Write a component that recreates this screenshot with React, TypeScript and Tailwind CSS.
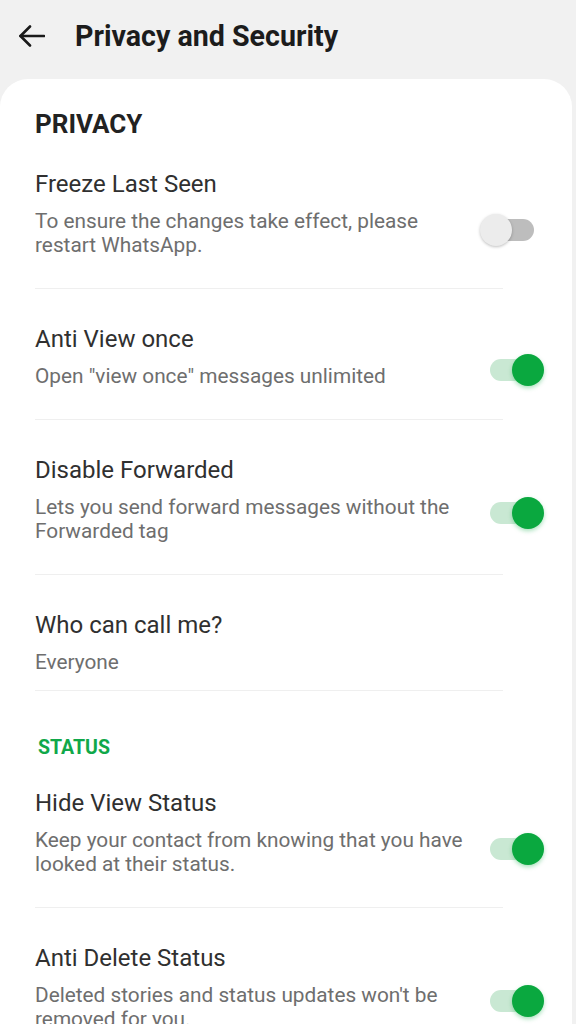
type Item = {
  title: string
  sub: string
  toggle?: boolean
  on?: boolean
  pt?: string
  pb?: string
}

const privacy: Item[] = [
  { title: "Freeze Last Seen", sub: "To ensure the changes take effect, please restart WhatsApp.", toggle: true, on: false, pt: "pt-[29px]" },
  { title: "Anti View once", sub: 'Open "view once" messages unlimited', toggle: true, on: true },
  { title: "Disable Forwarded", sub: "Lets you send forward messages without the Forwarded tag", toggle: true, on: true },
  { title: "Who can call me?", sub: "Everyone", pb: "pb-[16px]" },
]

const status: Item[] = [
  { title: "Hide View Status", sub: "Keep your contact from knowing that you have looked at their status.", toggle: true, on: true, pt: "pt-[28px]" },
  { title: "Anti Delete Status", sub: "Deleted stories and status updates won't be removed for you.", toggle: true, on: true },
]

function Toggle({ on }: { on: boolean }) {
  return (
    <div className="relative w-[64px] h-[32px] shrink-0 -ml-[23px] mt-[30px]">
      <div className={`absolute left-[10px] top-[5px] w-[44px] h-[22px] rounded-full ${on ? "bg-[#c9e8d3]" : "bg-[#bdbdbd]"}`} />
      <div
        className={`absolute top-0 w-[32px] h-[32px] rounded-full ${
          on
            ? "right-0 bg-[#0aa83f] shadow-[0_2px_4px_rgba(10,168,63,0.35)]"
            : "left-0 bg-[#ececec] shadow-[0_1px_3px_rgba(0,0,0,0.25)]"
        }`}
      />
    </div>
  )
}

function Row({ item }: { item: Item }) {
  return (
    <div className="flex items-center">
      <div className={`w-[468px] shrink-0 border-b border-[#efefef] ${item.pt ?? "pt-[35px]"} ${item.pb ?? "pb-[31px]"}`}>
        <p className="text-[24px] leading-[30px] text-[#303030]">{item.title}</p>
        <p className="mt-[10px] max-w-[440px] text-[20.8px] leading-[24px] text-[#6e6e6e]">{item.sub}</p>
      </div>
      {item.toggle && <Toggle on={!!item.on} />}
    </div>
  )
}

export default function App() {
  return (
    <div className="min-h-[1024px] bg-[#f1f1f1] font-['Roboto','Liberation_Sans',sans-serif] overflow-hidden">
      <div className="flex items-center h-[72px] pl-[19px]">
        <svg width="26" height="22" viewBox="0 0 26 22" fill="none" stroke="#1a1a1a" strokeWidth="2.6" strokeLinecap="round" strokeLinejoin="round">
          <path d="M25 11H1.5" />
          <path d="M11 1.5 1.5 11 11 20.5" />
        </svg>
        <h1 className="ml-[30px] text-[28.6px] leading-[36px] font-bold text-[#1c1c1c]">Privacy and Security</h1>
      </div>
      <div className="mt-[7px] mr-[4px] min-h-[945px] rounded-t-[28px] bg-white pl-[35px] pt-[29px]">
        <h2 className="text-[26px] leading-[32px] font-bold text-[#222]">PRIVACY</h2>
        {privacy.map((it) => (
          <Row key={it.title} item={it} />
        ))}
        <h2 className="mt-[45px] pl-[3px] text-[19.5px] leading-[24px] font-bold text-[#10a84a]">STATUS</h2>
        {status.map((it) => (
          <Row key={it.title} item={it} />
        ))}
      </div>
    </div>
  )
}
